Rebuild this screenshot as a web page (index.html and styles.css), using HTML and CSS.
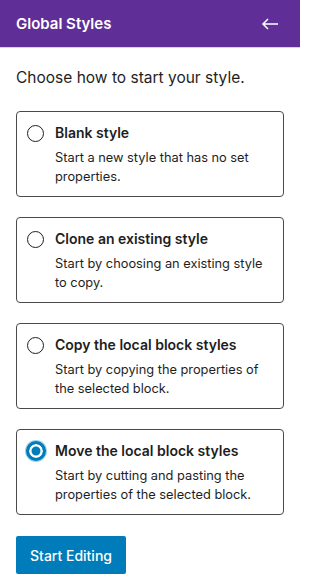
FILE: index.html
```html
<!DOCTYPE html>
<html lang="en">
<head>
<meta charset="utf-8">
<title>Global Styles</title>
<link rel="stylesheet" href="styles.css">
</head>
<body>
<header class="bar">
  <h1 class="bar-title">Global Styles</h1>
  <button class="back" aria-label="Back">
    <svg width="24" height="24" viewBox="0 0 24 24"><path d="M20 11.2H6.8l3.7-3.7-1-1L3.9 12l5.6 5.5 1-1-3.7-3.7H20z" fill="currentColor"/></svg>
  </button>
</header>
<main class="content">
  <p class="intro">Choose how to start your style.</p>
  <div class="options">
    <label class="card">
      <span class="radio"></span>
      <span class="text">
        <span class="title">Blank style</span>
        <span class="desc">Start a new style that has no set properties.</span>
      </span>
    </label>
    <label class="card">
      <span class="radio"></span>
      <span class="text">
        <span class="title">Clone an existing style</span>
        <span class="desc">Start by choosing an existing style to copy.</span>
      </span>
    </label>
    <label class="card">
      <span class="radio"></span>
      <span class="text">
        <span class="title">Copy the local block styles</span>
        <span class="desc">Start by copying the properties of the selected block.</span>
      </span>
    </label>
    <label class="card">
      <span class="radio checked"></span>
      <span class="text">
        <span class="title">Move the local block styles</span>
        <span class="desc">Start by cutting and pasting the properties of the selected block.</span>
      </span>
    </label>
  </div>
  <button class="primary">Start Editing</button>
</main>
</body>
</html>
```
FILE: styles.css
```css
* { box-sizing: border-box; }
html, body { margin: 0; padding: 0; background: #fff; }
body {
  font-family: Inter, "Noto Sans", "Liberation Sans", sans-serif;
  color: #1e1e1e;
  width: 300px;
}
.bar {
  height: 48px;
  background: #5f2e96;
  display: flex;
  align-items: center;
  justify-content: space-between;
  padding: 0 18px 0 16px;
  border-bottom: 1px solid #d9cfe6;
}
.bar-title {
  margin: 0;
  font-size: 15px;
  font-weight: 600;
  color: #fff;
}
.back {
  border: 0;
  background: none;
  padding: 0;
  color: #fff;
  display: flex;
  width: 24px;
  height: 24px;
}
.content {
  padding: 20px 16px 0;
}
.intro {
  margin: 0 0 23px;
  font-size: 15.5px;
  line-height: 20px;
}
.options {
  display: flex;
  flex-direction: column;
  gap: 20px;
}
.card {
  display: flex;
  gap: 11px;
  border: 1px solid #4a4a4a;
  border-radius: 4px;
  padding: 11px 7px 10px 10px;
  height: 86px;
}
.radio {
  flex: none;
  width: 17px;
  height: 17px;
  margin-top: 1.5px;
  border: 1.5px solid #1e1e1e;
  border-radius: 50%;
  background: #fff;
}
.radio.checked {
  width: 20px;
  height: 20px;
  margin: 0 -1.5px 0 -1.5px;
  border: 3px solid #007cba;
  background: #007cba;
  box-shadow: inset 0 0 0 2.5px #fff, 0 0 0 1px #9fd0ea;
}
.text {
  display: flex;
  flex-direction: column;
}
.title {
  font-size: 14px;
  font-weight: 600;
  line-height: 20px;
}
.desc {
  margin-top: 5px;
  font-size: 12.8px;
  line-height: 19px;
}
.primary {
  margin-top: 21px;
  height: 38px;
  padding: 0 14px;
  border: 0;
  border-radius: 2px;
  background: #007cba;
  color: #fff;
  font-family: inherit;
  font-size: 14px;
  font-weight: 500;
}
```
